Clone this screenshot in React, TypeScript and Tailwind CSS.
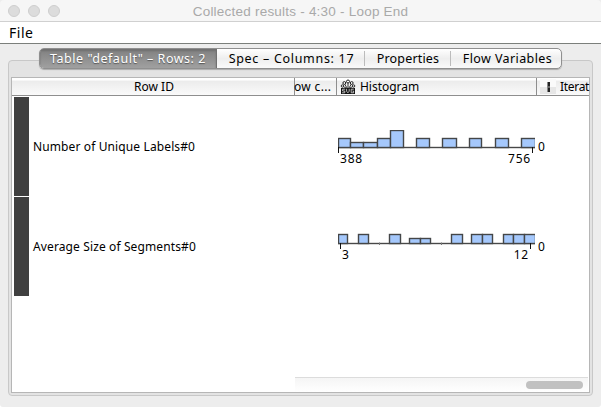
import React from "react";

type Bar = [start: number, end: number, height: number];

interface HistogramProps {
  bars: Bar[];
  ticks: [number, number];
  marks?: number[];
}

const ROWS = [
  {
    id: "Number of Unique Labels#0",
    idClass: "tracking-[0.12px]",
    chartClass: "pt-[34px]",
    min: "388",
    max: "756",
    minClass: "pl-[2px]",
    maxClass: "pr-[4px]",
    ticks: [0, 194] as [number, number],
    marks: [],
    bars: [
      [0, 12, 9], [12, 25, 5], [25, 39, 5], [39, 52, 9], [52, 65, 17],
      [78, 91, 9], [104, 118, 9], [131, 143, 9], [157, 170, 9], [183, 197, 9],
    ] as Bar[],
  },
  {
    id: "Average Size of Segments#0",
    idClass: "tracking-[0.12px]",
    chartClass: "pt-[30px]",
    min: "3",
    max: "12",
    minClass: "pl-[4px]",
    maxClass: "pr-[6px]",
    ticks: [2, 192] as [number, number],
    marks: [41, 103],
    bars: [
      [0, 9, 9], [20, 30, 9], [51, 62, 9], [71, 82, 5], [82, 92, 5],
      [113, 124, 9], [133, 144, 9], [144, 154, 9], [165, 175, 9],
      [175, 186, 9], [186, 197, 9],
    ] as Bar[],
  },
];

function Histogram({ bars, ticks, marks = [] }: HistogramProps) {
  return (
    <svg width="197" height="24" viewBox="0 0 197 24" className="block">
      <path d="M0 17.5H197" stroke="#b8b8b8" strokeWidth="2" />
      <path d="M0 17.5H197" stroke="#484848" />
      {bars.map(([a, b, h]) => (
        <rect key={a} x={a + 0.5} y={17.5 - h} width={b - a} height={h} fill="#a5c8fc" stroke="#444648" strokeWidth="1.4" />
      ))}
      {marks.map((m) => (
        <path key={m} d={`M${m + 0.5} 16.5V19`} stroke="#777" />
      ))}
      {ticks.map((t) => (
        <path key={t} d={`M${t + 0.5} 17V23`} stroke="#111" />
      ))}
    </svg>
  );
}

function SvgIcon() {
  return (
    <svg width="16" height="16" viewBox="0 0 16 16" className="block shrink-0">
      <path d="M8 9V3M7 9L4 4M9 9L12 4M6 9L2.2 7M10 9L13.8 7" stroke="#222" strokeWidth="0.9" />
      <g fill="#fff" stroke="#222" strokeWidth="1">
        <circle cx="8" cy="2.5" r="1.5" />
        <circle cx="4.3" cy="4" r="1.4" />
        <circle cx="11.7" cy="4" r="1.4" />
        <circle cx="2.4" cy="7" r="1.2" />
        <circle cx="13.6" cy="7" r="1.2" />
      </g>
      <rect x="1" y="9" width="14" height="6" fill="#111" />
      <path d="M5.2 10.2H2.6V12H4.8V13.8H2M6.6 9.8V12.2L7.9 13.8L9.2 12.2V9.8M13.8 10.2H11.2V13.8H13.6V12H12.4" fill="none" stroke="#ddd" strokeWidth="0.8" />
    </svg>
  );
}

function TypeIcon() {
  return (
    <svg width="16" height="16" viewBox="0 0 16 16" className="block shrink-0">
      <rect width="16" height="16" fill="#fafafa" />
      <rect y="8" width="16" height="7" fill="#e6e6e6" />
      <rect x="7" y="3" width="3" height="10" fill="#888" />
      <rect x="8" y="3" width="2" height="10" fill="#222" />
      <rect x="8" y="7" width="2" height="2" fill="#666" />
    </svg>
  );
}

export default function App() {
  return (
    <div className="flex h-[407px] w-[601px] flex-col overflow-hidden rounded-b-[3px] bg-[#ededed] font-['Noto_Sans','Open_Sans',sans-serif] text-[12px] leading-[16px] text-black">
      <header className="grid h-[22px] shrink-0 grid-cols-[80px_1fr_80px] items-center rounded-t-[4px] border-b border-[#d0d0d0] bg-[#f6f6f6]">
        <div className="flex gap-2 pl-2">
          {[0, 1, 2].map((n) => (
            <span key={n} className="h-3 w-3 rounded-full border border-[#cecece] bg-[#dcdcdc]" />
          ))}
        </div>
        <h1 className="whitespace-nowrap pt-[2px] text-center font-['Liberation_Sans',sans-serif] text-[13.5px] tracking-[0.22px] text-[#a9a9a9]">
          Collected results - 4:30 - Loop End
        </h1>
      </header>

      <nav className="flex h-[22px] shrink-0 items-center border-b border-[#7b7f7b] bg-white pl-[9px] text-[14px] tracking-[0.5px]">File</nav>

      <main className="flex flex-1 flex-col px-2 pt-4 pb-[11px]">
        <div className="flex flex-1 flex-col rounded-[4px] border border-[#c8c8c8] bg-[#e3e3e3] px-[2px] pb-[2px]">
          <div className="-mt-[13px] ml-[28px] flex h-[21px] w-[523px] shrink-0 overflow-hidden rounded-[5px] border border-[#8f8f8f] bg-linear-to-b from-white via-[#eeeeee] to-[#fafafa] text-[12.5px] whitespace-nowrap shadow-[0_1px_1px_#aaa]">
            <div className="flex w-[177px] items-center justify-center border-r border-[#707070] bg-linear-to-b from-[#808080] to-[#a0a0a0] text-white shadow-[inset_0_2px_2px_#707070] text-shadow-[0_1px_1px_#555]">
              <span className="tracking-[0.52px]">Table "default" – Rows: 2</span>
            </div>
            <div className="flex w-[147px] items-center justify-center pl-[2px]"><span className="tracking-[0.7px]">Spec – Columns: 17</span></div>
            <span className="my-[2px] w-px bg-[#bcbcbc]" />
            <div className="flex w-[85px] items-center justify-center pl-px"><span className="tracking-[0.16px]">Properties</span></div>
            <span className="my-[2px] w-px bg-[#bcbcbc]" />
            <div className="flex flex-1 items-center justify-center pl-[3px]"><span className="tracking-[0.4px]">Flow Variables</span></div>
          </div>

          <div className="mt-2 flex flex-1 border border-[#b6b6b6] bg-white">
            <section className="w-[282px] shrink-0">
              <div className="h-[18px] border-b border-[#8e8e8e] bg-linear-to-b from-white from-10% via-[#ececec] via-20% to-[#fafafa] pl-[2px] text-center leading-[18px]">Row ID</div>
              <div className="flex flex-col gap-px pt-px pl-[2px]">
                {ROWS.map((row) => (
                  <div key={row.id} className="flex h-[99px] items-center">
                    <span className="h-full w-[15px] bg-[#404040]" />
                    <span className={`pt-px pl-1 whitespace-nowrap ${row.idClass}`}>{row.id}</span>
                  </div>
                ))}
              </div>
            </section>
            <section className="flex min-w-0 flex-1 flex-col">
              <div className="flex h-[18px] shrink-0 border-b border-[#8e8e8e] bg-linear-to-b from-white from-10% via-[#ececec] via-20% to-[#fafafa] leading-[18px] whitespace-nowrap">
                <div className="flex w-[42px] shrink-0 border-l border-[#8e8e8e]"><span className="-ml-px tracking-[0.35px]">ow c...</span></div>
                <div className="flex w-[200px] shrink-0 items-center gap-1 border-l border-[#8e8e8e] pl-[3px]"><SvgIcon /><span className="tracking-[-0.02px]">Histogram</span></div>
                <div className="flex min-w-0 flex-1 items-center gap-1 border-l border-[#8e8e8e] pl-[3px]"><TypeIcon /><span className="tracking-[-0.3px]">Iterat</span></div>
              </div>
              {ROWS.map((row) => (
                <div key={row.id} className="flex h-[100px] shrink-0 pl-[44px]">
                  <div className={`w-[197px] ${row.chartClass}`}>
                    <Histogram bars={row.bars} ticks={row.ticks} marks={row.marks} />
                    <div className="-mt-[3px] flex justify-between tracking-[0.8px]">
                      <span className={row.minClass}>{row.min}</span><span className={row.maxClass}>{row.max}</span>
                    </div>
                  </div>
                  <span className="pt-[43px] pl-[3px]">0</span>
                </div>
              ))}
              <div className="mt-auto mr-px ml-px flex h-[15px] items-center justify-end border-t border-[#dcdcdc] bg-linear-to-b from-[#f5f5f5] to-white pr-[5px]">
                <span className="h-2 w-[57px] rounded-full bg-[#c1c1c1]" />
              </div>
            </section>
          </div>
        </div>
      </main>
    </div>
  );
}
